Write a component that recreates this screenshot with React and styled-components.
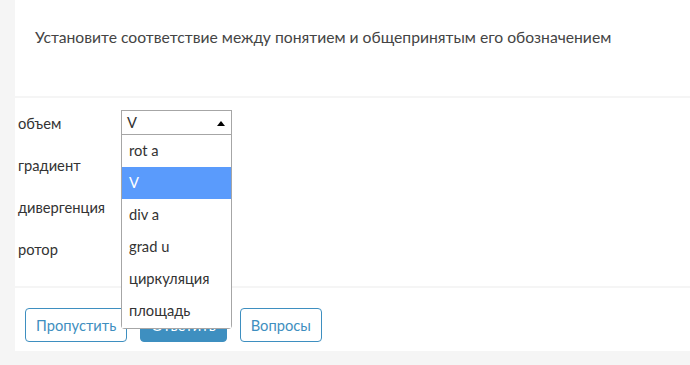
import React from 'react';
import styled, { createGlobalStyle } from 'styled-components';

const GlobalStyle = createGlobalStyle`
  body {
    margin: 0;
    background: #f5f5f5;
    font-family: Lato, "Open Sans", sans-serif;
    color: #333;
  }
`;

const rows = ['объем', 'градиент', 'дивергенция', 'ротор'];
const options = ['rot a', 'V', 'div a', 'grad u', 'циркуляция', 'площадь'];

const App = () => {
  return (
    <>
      <GlobalStyle />
      <Card>
        <Header>Установите соответствие между понятием и общепринятым его обозначением</Header>
        <Divider />
        <Rows>
          {rows.map((label, i) => (
            <Row key={label}>
              <Label>{label}</Label>
              <SelectBox>
                <span>{i === 0 ? 'V' : ''}</span>
                <Arrow />
                {i === 0 && (
                  <Menu>
                    {options.map(opt => (
                      <Option key={opt} active={opt === 'V'}>{opt}</Option>
                    ))}
                  </Menu>
                )}
              </SelectBox>
            </Row>
          ))}
        </Rows>
        <Divider />
        <Footer>
          <Button>Пропустить</Button>
          <Button primary>Ответить</Button>
          <Button>Вопросы</Button>
        </Footer>
      </Card>
    </>
  );
};

const Card = styled.div`
  margin-left: 15px;
  width: 675px;
  background: #fff;
`;

const Header = styled.div`
  height: 96px;
  box-sizing: border-box;
  padding: 28px 20px 0;
  font-size: 15.7px;
  color: #444;
`;

const Divider = styled.div`
  height: 2px;
  background: #f5f5f5;
`;

const Rows = styled.div`
  padding: 3px 0 17px 3px;
`;

const Row = styled.div`
  display: flex;
  align-items: center;
  height: 42px;
`;

const Label = styled.div`
  width: 103px;
  font-size: 14.7px;
  padding-top: 2px;
`;

const SelectBox = styled.div`
  position: relative;
  display: flex;
  align-items: center;
  justify-content: space-between;
  box-sizing: border-box;
  width: 111px;
  height: 25px;
  padding: 0 6px 0 5px;
  border: 1px solid #a6a6a6;
  font-size: 14.7px;
  background: #fff;
`;

const Arrow = styled.span`
  width: 0;
  height: 0;
  margin-top: 3px;
  border-left: 4px solid transparent;
  border-right: 4px solid transparent;
  border-bottom: 5px solid #000;
`;

const Menu = styled.div`
  position: absolute;
  top: 24px;
  left: -1px;
  width: 111px;
  box-sizing: border-box;
  border: 1px solid #a6a6a6;
  border-top: none;
  border-radius: 0 0 4px 4px;
  background: #fff;
  z-index: 2;
`;

const Option = styled.div`
  height: 32px;
  line-height: 30px;
  padding-left: 7px;
  font-size: 14.7px;
  background: ${p => (p.active ? '#5a9bfc' : '#fff')};
  color: ${p => (p.active ? '#fff' : '#333')};
  &:last-child {
    height: 33px;
  }
`;

const Footer = styled.div`
  display: flex;
  gap: 13px;
  padding: 20px 10px 9px;
`;

const Button = styled.button`
  height: 34px;
  padding: 0 10px;
  border: 1px solid #3e8fc0;
  border-radius: 4px;
  background: ${p => (p.primary ? '#3e8fc0' : '#fff')};
  color: ${p => (p.primary ? '#fff' : '#3e8fc0')};
  font-family: Lato, "Open Sans", sans-serif;
  font-size: 14.7px;
  cursor: pointer;
`;

export default App;
